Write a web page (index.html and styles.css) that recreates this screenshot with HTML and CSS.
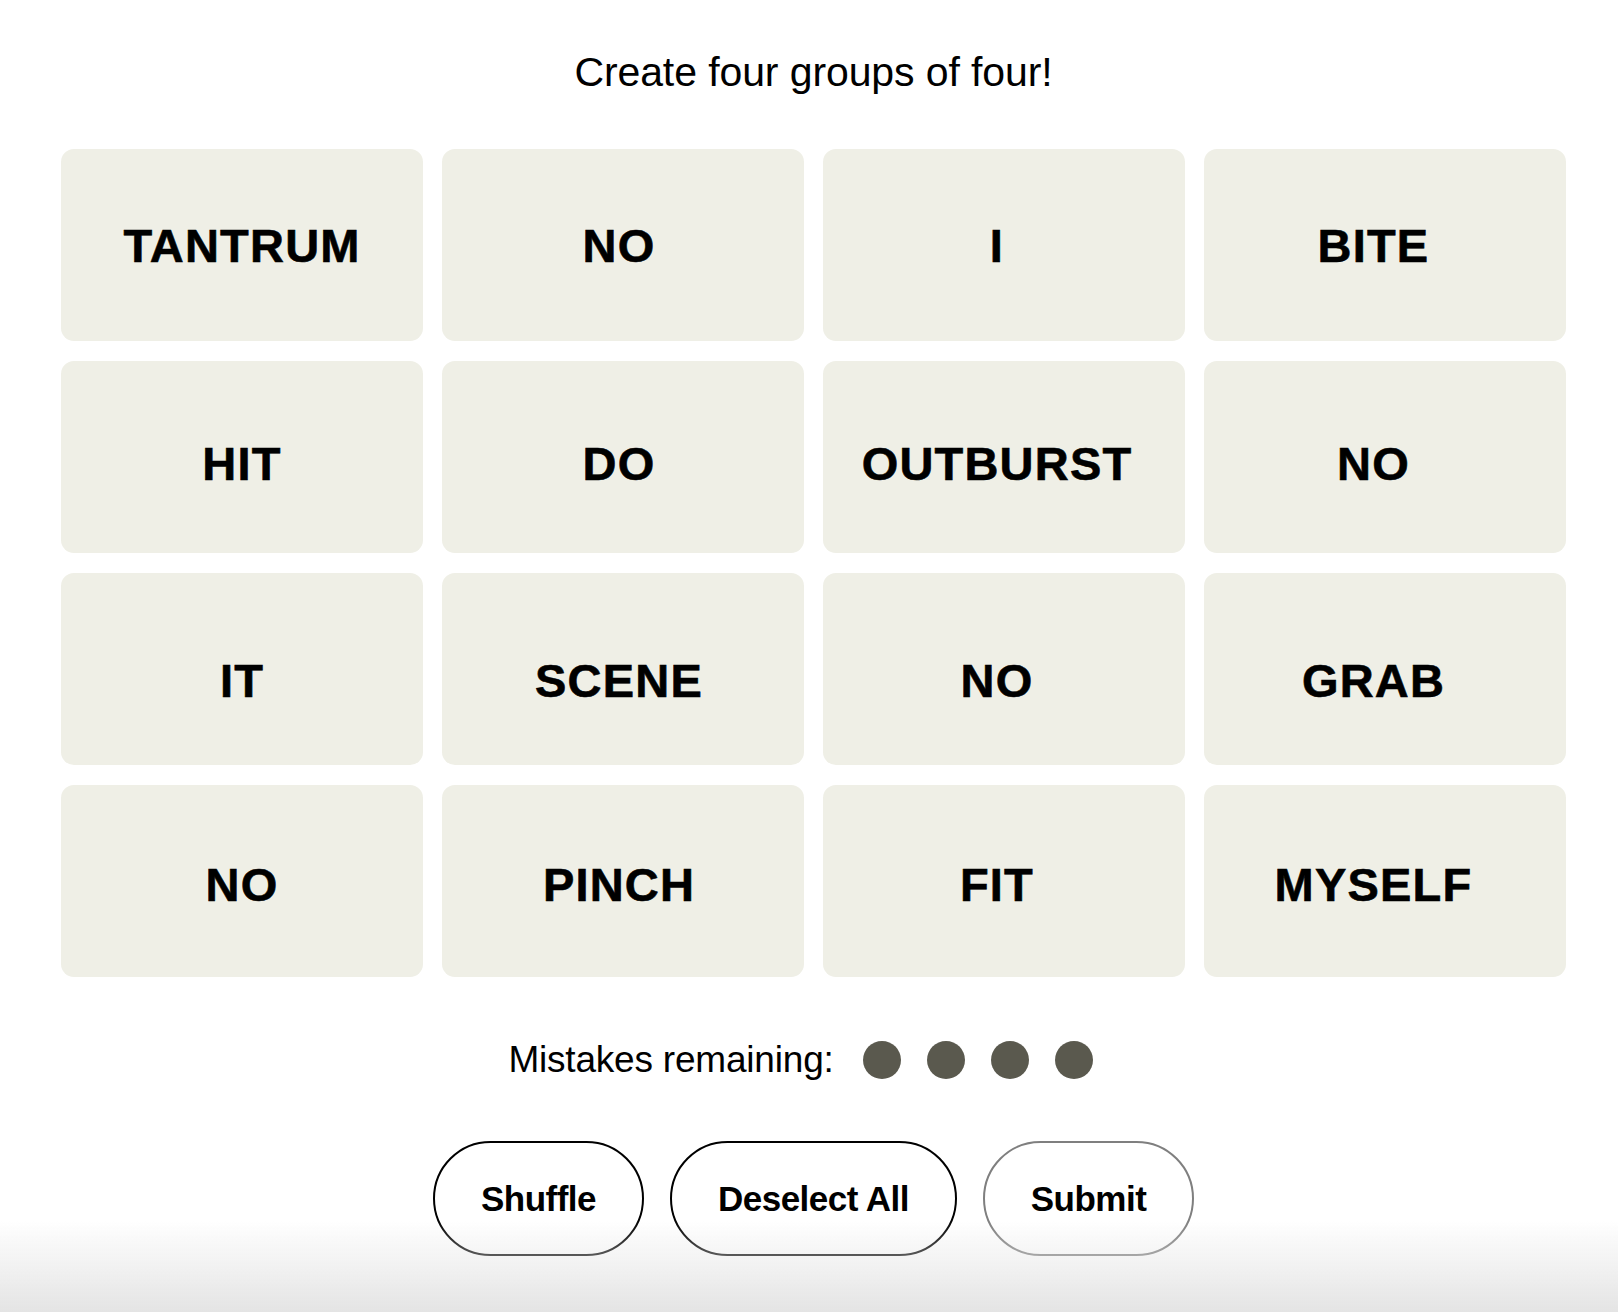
FILE: index.html
```html
<!DOCTYPE html>
<html lang="en">
<head>
    <meta charset="UTF-8">
    <meta name="viewport" content="width=device-width, initial-scale=1.0">
    <title>Connections</title>
    <link rel="stylesheet" href="styles.css">
</head>
<body>

<main class="game">
  <h1 class="prompt">Create four groups of four!</h1>

  <div class="board">
    <button class="tile">TANTRUM</button>
    <button class="tile">NO</button>
    <button class="tile">I</button>
    <button class="tile">BITE</button>
    <button class="tile">HIT</button>
    <button class="tile">DO</button>
    <button class="tile">OUTBURST</button>
    <button class="tile">NO</button>
    <button class="tile">IT</button>
    <button class="tile">SCENE</button>
    <button class="tile">NO</button>
    <button class="tile">GRAB</button>
    <button class="tile">NO</button>
    <button class="tile">PINCH</button>
    <button class="tile">FIT</button>
    <button class="tile">MYSELF</button>
  </div>

  <div class="mistakes">
    <span class="mistakes-label">Mistakes remaining:</span>
    <span class="dots">
      <span class="dot"></span>
      <span class="dot"></span>
      <span class="dot"></span>
      <span class="dot"></span>
    </span>
  </div>

  <div class="controls">
    <button class="pill pill-shuffle">Shuffle</button>
    <button class="pill pill-deselect">Deselect All</button>
    <button class="pill pill-submit" disabled>Submit</button>
  </div>
</main>

<div class="fade"></div>

</body>
</html>
```

FILE: styles.css
```css
body {
    margin: 0;
    padding: 0;
    background: #fff;
    color: #000;
    font-family: "Liberation Sans", Arial, sans-serif;
}
.game {
    padding: 47px 52px 0 61px;
}
.prompt {
    margin: 0;
    font-size: 41px;
    font-weight: 400;
    line-height: 50px;
    text-align: center;
    letter-spacing: -0.1px;
}
.board {
    margin-top: 52px;
    display: grid;
    grid-template-columns: repeat(4, 362px);
    grid-auto-rows: 192px;
    column-gap: 19px;
    row-gap: 20px;
}
.tile {
    border: 0;
    border-radius: 13px;
    background-color: #efefe6;
    color: #000;
    font-family: "Liberation Sans", Arial, sans-serif;
    font-size: 47px;
    font-weight: 700;
    letter-spacing: 1.2px;
    -webkit-text-stroke: 0.6px #000;
    padding: 0;
    display: flex;
    align-items: center;
    justify-content: center;
}
.tile:nth-child(n+5) {
    padding-top: 12px;
}
.tile:nth-child(n+9) {
    padding-top: 22px;
}
.tile:nth-child(n+13) {
    padding-top: 6px;
}
.tile:nth-child(4n+2) {
    padding-right: 8px;
}
.tile:nth-child(4n+3) {
    padding-right: 14px;
}
.tile:nth-child(4n) {
    padding-right: 23px;
}
.mistakes {
    margin-top: 63px;
    padding-right: 26px;
    display: flex;
    justify-content: center;
    align-items: center;
    gap: 29px;
    height: 40px;
}
.mistakes-label {
    font-size: 37px;
    letter-spacing: -0.2px;
}
.dots {
    display: flex;
    gap: 26px;
}
.dot {
    width: 38px;
    height: 38px;
    border-radius: 50%;
    background-color: #5a594e;
}
.controls {
    margin-top: 61px;
    display: flex;
    justify-content: center;
    gap: 26px;
}
.pill {
    height: 115px;
    border: 2.5px solid #000;
    border-radius: 58px;
    background: #fff;
    color: #000;
    font-family: "Liberation Sans", Arial, sans-serif;
    font-size: 35px;
    font-weight: 700;
    letter-spacing: -0.5px;
    padding: 0;
}
.pill-shuffle {
    width: 211px;
}
.pill-deselect {
    width: 287px;
}
.pill-submit {
    width: 211px;
    border-color: #7f7f7f;
    color: #000;
}
.fade {
    position: fixed;
    left: 0;
    right: 0;
    bottom: 0;
    height: 92px;
    background: linear-gradient(rgba(228, 228, 228, 0), rgba(228, 228, 228, 1));
    pointer-events: none;
}
```
